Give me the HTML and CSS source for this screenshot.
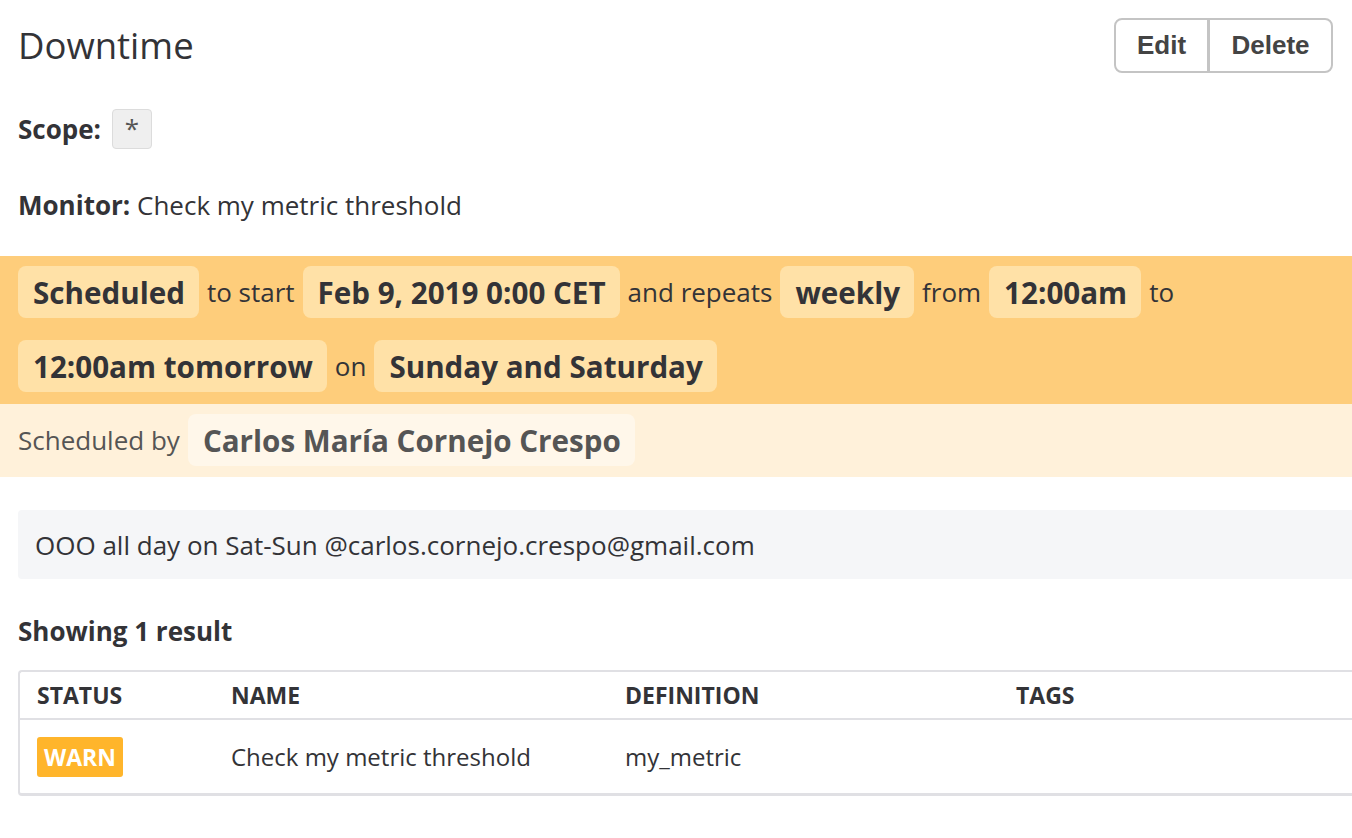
FILE: index.html
```html
<!DOCTYPE html>
<html>
<head>
<meta charset="utf-8">
<link rel="stylesheet" href="styles.css">
</head>
<body>
<div class="page">
  <header class="top">
    <h1 class="title">Downtime</h1>
    <div class="btn-group">
      <button class="btn">Edit</button>
      <button class="btn">Delete</button>
    </div>
  </header>

  <div class="scope">
    <span class="label">Scope:</span>
    <span class="scope-tag">*</span>
  </div>

  <div class="monitor"><span class="label">Monitor:</span> Check my metric threshold</div>

  <section class="schedule">
    <span class="chip">Scheduled</span>
    <span class="word">to start</span>
    <span class="chip">Feb 9, 2019 0:00 CET</span>
    <span class="word">and repeats</span>
    <span class="chip">weekly</span>
    <span class="word">from</span>
    <span class="chip">12:00am</span>
    <span class="word">to</span>
    <span class="chip">12:00am tomorrow</span>
    <span class="word">on</span>
    <span class="chip">Sunday and Saturday</span>
  </section>
  <section class="byline">
    <span class="word">Scheduled by</span>
    <span class="chip chip-light">Carlos María Cornejo Crespo</span>
  </section>

  <div class="note">OOO all day on Sat-Sun @carlos.cornejo.crespo@gmail.com</div>

  <div class="count">Showing 1 result</div>

  <div class="table">
    <div class="row head">
      <div>STATUS</div>
      <div>NAME</div>
      <div>DEFINITION</div>
      <div>TAGS</div>
    </div>
    <div class="row body">
      <div><span class="warn">WARN</span></div>
      <div>Check my metric threshold</div>
      <div>my_metric</div>
      <div></div>
    </div>
  </div>
</div>
</body>
</html>
```
FILE: styles.css
```css
html, body {
  margin: 0;
  padding: 0;
  background: #fff;
  overflow-x: hidden;
}
body {
  font-family: "Open Sans", "Noto Sans", sans-serif;
  color: #333337;
  font-size: 26px;
}
.page {
  width: 1352px;
}
.top {
  display: flex;
  justify-content: space-between;
  align-items: center;
  padding: 18px 19px 0 18px;
  height: 55px;
}
.title {
  margin: 0;
  font-size: 36.5px;
  font-weight: 400;
  line-height: 55px;
  color: #333337;
}
.btn-group {
  display: flex;
  height: 55px;
}
.btn {
  font-family: "Liberation Sans", Arial, sans-serif;
  font-weight: 700;
  font-size: 26px;
  color: #444;
  background: #fff;
  border: 2px solid #c4c4c4;
  height: 55px;
  margin: 0;
  cursor: pointer;
}
.btn:first-child {
  border-radius: 8px 0 0 8px;
  width: 94px;
  border-right-width: 1px;
}
.btn:last-child {
  border-radius: 0 8px 8px 0;
  width: 125px;
  border-left-width: 2px;
}
.label {
  font-weight: 700;
}
.scope {
  display: flex;
  align-items: center;
  gap: 11px;
  margin: 36px 0 0 18px;
  height: 40px;
}
.scope-tag {
  display: inline-flex;
  justify-content: center;
  align-items: flex-start;
  width: 38px;
  height: 38px;
  background: #efefef;
  border: 1px solid #dcdcdc;
  border-radius: 4px;
  font-size: 26px;
  line-height: 36px;
  color: #555;
}
.monitor {
  margin: 40px 0 0 18px;
  line-height: 32px;
}
.schedule {
  margin-top: 35px;
  background: #fecd7b;
  padding: 10px 18px 12px;
  display: flex;
  flex-wrap: wrap;
  align-items: center;
  column-gap: 8px;
  row-gap: 22px;
}
.chip {
  display: inline-flex;
  align-items: center;
  height: 52px;
  padding: 0 14px 0 15px;
  background: #ffe1a7;
  border-radius: 8px;
  font-weight: 700;
  font-size: 29.6px;
  color: #333337;
}
.word {
  font-size: 26px;
  line-height: 52px;
  height: 52px;
}
.byline {
  background: #fff1da;
  padding: 10px 18px 11px;
  display: flex;
  align-items: center;
  column-gap: 8px;
  color: #555;
}
.chip-light {
  background: #fff7ea;
  color: #555;
}
.note {
  margin: 33px 0 0 18px;
  height: 69px;
  display: flex;
  align-items: center;
  padding-left: 17px;
  background: #f5f6f8;
  border-radius: 4px 0 0 4px;
  color: #333337;
}
.count {
  margin: 36px 0 0 18px;
  font-weight: 700;
  line-height: 32px;
}
.table {
  margin: 23px 0 0 18px;
  border: 2px solid #e0e0e4;
  border-right: none;
  border-bottom-width: 3px;
  border-radius: 4px 0 0 4px;
}
.row {
  display: grid;
  grid-template-columns: 194px 394px 391px 1fr;
  padding-left: 17px;
  align-items: center;
}
.head {
  height: 46px;
  border-bottom: 2px solid #e0e0e4;
  font-weight: 700;
  font-size: 23px;
}
.body {
  height: 73px;
  font-size: 24px;
}
.warn {
  display: inline-flex;
  align-items: center;
  height: 40px;
  padding: 0 7px;
  background: #ffb52b;
  color: #fff;
  font-weight: 700;
  font-size: 23px;
  border-radius: 3px;
}
```
